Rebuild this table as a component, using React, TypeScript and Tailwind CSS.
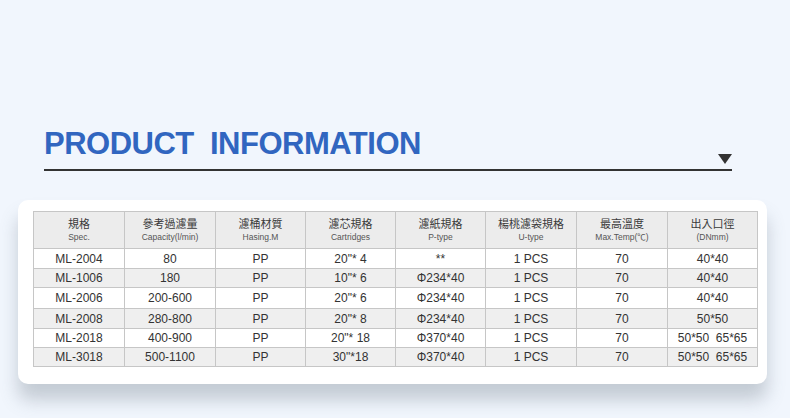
const headers = [
  { zh: "規格", en: "Spec." },
  { zh: "參考過濾量", en: "Capacity(l/min)" },
  { zh: "濾桶材質", en: "Hasing.M" },
  { zh: "濾芯規格", en: "Cartridges" },
  { zh: "濾紙規格", en: "P-type" },
  { zh: "楊桃濾袋規格", en: "U-type" },
  { zh: "最高溫度", en: "Max.Temp(℃)" },
  { zh: "出入口徑", en: "(DNmm)" },
]

const colWidths = [91, 91, 90, 90, 90, 91, 91, 90]

const rows = [
  { h: "h-[20px]", cells: ["ML-2004", "80", "PP", "20\"* 4", "**", "1 PCS", "70", "40*40"] },
  { h: "h-[19px]", cells: ["ML-1006", "180", "PP", "10\"* 6", "Φ234*40", "1 PCS", "70", "40*40"] },
  { h: "h-[21px]", cells: ["ML-2006", "200-600", "PP", "20\"* 6", "Φ234*40", "1 PCS", "70", "40*40"] },
  { h: "h-[20px]", cells: ["ML-2008", "280-800", "PP", "20\"* 8", "Φ234*40", "1 PCS", "70", "50*50"] },
  { h: "h-[19px]", cells: ["ML-2018", "400-900", "PP", "20\"* 18", "Φ370*40", "1 PCS", "70", "50*50  65*65"] },
  { h: "h-[19px]", cells: ["ML-3018", "500-1100", "PP", "30\"*18", "Φ370*40", "1 PCS", "70", "50*50  65*65"] },
]

export default function App() {
  return (
    <div
      className="w-[790px] h-[418px] overflow-hidden bg-[#f1f6fd] pt-[128px]"
      style={{ fontFamily: '"Liberation Sans", Arial, "Noto Sans CJK TC", sans-serif' }}
    >
      {/* title */}
      <div className="ml-[44px] w-[688px] flex items-end justify-between border-b-2 border-[#333333] pb-[5px]">
        <h2 className="mb-[5px] text-[31px] leading-[31px] font-bold tracking-[-0.5px] text-[#3166c0] whitespace-pre">
          PRODUCT  INFORMATION
        </h2>
        <svg width="14" height="10" viewBox="0 0 14 10" className="block">
          <polygon points="0,0 14,0 7,10" fill="#333333" />
        </svg>
      </div>

      {/* card */}
      <div className="mt-[29px] ml-[18px] w-[749px] h-[184px] rounded-[10px] bg-white pt-[11px] pl-[15px] shadow-[0_16px_18px_rgba(80,92,108,0.28)]">
        <table className="border-collapse table-fixed w-[724px] text-center">
          <colgroup>
            {colWidths.map((w, i) => (
              <col key={i} style={{ width: w }} />
            ))}
          </colgroup>
          <thead>
            <tr className="h-[37px] bg-[#ececec]">
              {headers.map((h) => (
                <th key={h.zh} className="border border-[#c6c6c6] p-0 font-normal align-middle">
                  <div className="text-[11px] leading-[13px] text-[#3a3a3a]">{h.zh}</div>
                  <div className="mt-[1px] text-[8.5px] leading-[10px] text-[#555555]">{h.en}</div>
                </th>
              ))}
            </tr>
          </thead>
          <tbody>
            {rows.map((r, i) => (
              <tr key={r.cells[0]} className={`${r.h} ${i % 2 === 1 ? "bg-[#efefef]" : "bg-white"}`}>
                {r.cells.map((c, j) => (
                  <td
                    key={j}
                    className="border border-[#c6c6c6] p-0 text-[12px] leading-[14px] text-[#333333] whitespace-pre align-middle"
                  >
                    {c}
                  </td>
                ))}
              </tr>
            ))}
          </tbody>
        </table>
      </div>
    </div>
  )
}
